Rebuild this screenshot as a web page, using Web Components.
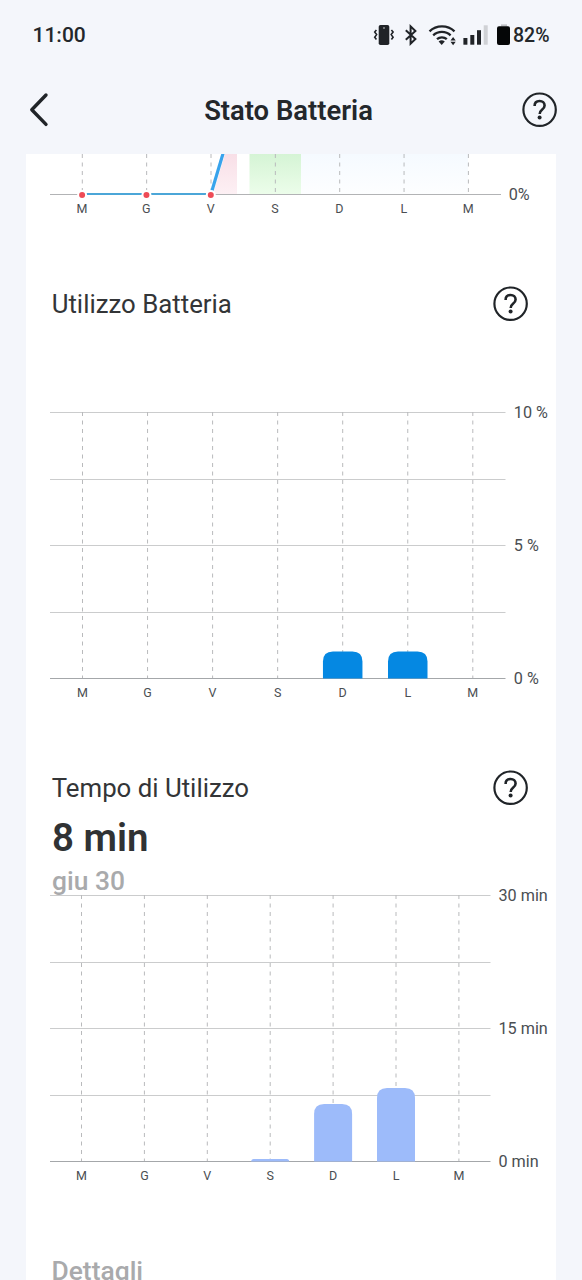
<!DOCTYPE html>
<html lang="it">
<head>
<meta charset="utf-8">
<meta name="viewport" content="width=device-width, initial-scale=1">
<title>Stato Batteria</title>
<style>
html, body { margin: 0; height: 100%; background: #f4f6fb; overflow: hidden; }
body { font-family: Roboto, "Liberation Sans", sans-serif; color: #23272b; }
</style>
</head>
<body>
<battery-app></battery-app>
<script>
const define = (name, html, extra) => customElements.define(name, class extends HTMLElement {
  connectedCallback() {
    if (this.shadowRoot) return;
    const root = this.attachShadow({ mode: 'open' });
    root.innerHTML = html;
    if (extra) extra(this, root);
  }
});

define('help-icon', `
<style>:host{display:block;width:36px;height:36px;flex:none}svg{display:block}</style>
<svg width="36" height="36" viewBox="0 0 36 36" fill="none" stroke="#202428">
  <circle cx="17.6" cy="17.7" r="16.2" stroke-width="2.2"/>
  <path d="M12.6 13.9C12.6 10.8 14.7 9 17.6 9s5 1.8 5 4.5c0 2.2-1.2 3.2-2.6 4.3-1.5 1.2-2.3 2.1-2.3 4.1" stroke-width="2.6"/>
  <circle cx="17.6" cy="25.6" r="2" fill="#202428" stroke="none"/>
</svg>`);

define('status-bar', `
<style>
:host{display:flex;align-items:center;justify-content:space-between;height:70px;padding:0 32px 0 32.5px;box-sizing:border-box}
.time{font-size:21px;font-weight:500}
.icons{display:flex;align-items:center}
svg{display:block;flex:none}
.pct{font-size:19.5px;font-weight:500;width:37px;white-space:nowrap}
</style>
<span class="time">11:00</span>
<div class="icons">
<svg width="141" height="30" viewBox="372 20 141 30" fill="#202327">
  <rect x="378.7" y="25" width="10.6" height="20" rx="1.8"/><circle cx="384" cy="28" r=".8" fill="#d8dade"/>
  <path d="M376.4 30l-1.7 2 1.9 2.6-1.9 2.6 1.7 2.3M391.4 30l1.7 2-1.9 2.6 1.9 2.6-1.7 2.3" fill="none" stroke="#202327" stroke-width="1.6"/>
  <path d="M405.8 30.2l9.6 8.8-4.8 4.6V26.4l4.8 4.6-9.6 8.8" fill="none" stroke="#202327" stroke-width="2"/>
  <g fill="none" stroke="#202327" stroke-width="2.3"><path d="M429.5 31.4a18.3 18.3 0 0 1 25 0"/><path d="M433.2 35.3a12.7 12.7 0 0 1 17.4 0"/><path d="M437 39.2a7.2 7.2 0 0 1 9.8 0"/></g>
  <path d="M438.6 41.6a4.8 4.8 0 0 1 6.2 0L441.7 45z"/>
  <path d="M450.5 40.4l2.6-3.4 2.6 3.4zM450.5 41.8h5.2l-2.6 3.4z"/>
  <rect x="463.4" y="38" width="4" height="6.7"/><rect x="470.3" y="35" width="4" height="9.7"/><rect x="477" y="30.2" width="4" height="14.5"/><rect x="483.7" y="25.3" width="4" height="19.4" fill="#cfd1d5"/>
  <path d="M501 24.4h6v2h-6z" fill="#bdbfc3"/><rect x="497" y="26.2" width="13" height="18.7" rx="2" fill="#050607"/>
</svg>
<span class="pct">82%</span>
</div>`);

define('page-header', `
<style>
:host{display:flex;align-items:center;justify-content:space-between;height:84px;padding:0 24px 5px 26px;box-sizing:border-box}
.back{width:29px}
h1{margin:0;font-size:27.4px;font-weight:600;line-height:32px;padding-top:3px;white-space:nowrap}
svg{display:block}
</style>
<div class="back"><svg width="26" height="36" viewBox="0 0 26 36" fill="none" stroke="#202428" stroke-width="3.4" stroke-linecap="round" stroke-linejoin="round"><path d="M20 3L5.8 17.7 20 32.4"/></svg></div>
<h1><slot></slot></h1>
<help-icon></help-icon>`);

define('section-head', `
<style>
:host{display:flex;align-items:center;justify-content:space-between;height:46px;padding:0 27px 0 25.7px}
h2{margin:0;font-size:25.8px;font-weight:400;color:#333537;line-height:30px;white-space:nowrap}
</style>
<h2><slot></slot></h2><help-icon></help-icon>`);

define('usage-value', `
<style>
:host{display:flex;flex-direction:column;height:84px;padding-left:26px;box-sizing:border-box}
.v{font-size:38.5px;font-weight:600;line-height:46px;color:#303234;padding-top:4px}
.d{font-size:26.4px;font-weight:500;line-height:30px;color:#a9aaac;padding-top:5px;white-space:nowrap}
</style>
<div class="v"><slot name="value"></slot></div><div class="d"><slot name="date"></slot></div>`);

const DAYS = ['M', 'G', 'V', 'S', 'D', 'L', 'M'];
const chartStyle = `
<style>
:host{display:block}
svg{display:block;overflow:visible}
text{font-family:Roboto,"Liberation Sans",sans-serif;fill:#4a4e52}
.x{font-size:12.5px;text-anchor:middle}
.y{font-size:16.2px}
.dash{stroke:#b9babc;stroke-width:1;stroke-dasharray:4 4.5}
</style>`;

define('level-chart', chartStyle + '<div></div>', (host, root) => {
  const x = i => 82 + i * 64.35;
  const days = DAYS.map((d, i) => `<line class="dash" x1="${x(i) + .3}" x2="${x(i) + .3}" y1="154" y2="194"/><text class="x" x="${x(i)}" y="213.3">${d}</text>`).join('');
  root.querySelector('div').innerHTML = `
<svg width="530" height="127" viewBox="26 154 530 127">
<defs>
<clipPath id="c"><rect x="26" y="154" width="530" height="127"/></clipPath>
<linearGradient id="r" x2="0" y2="1"><stop stop-color="#f8dfe7"/><stop offset="1" stop-color="#fdf0f4"/></linearGradient>
<linearGradient id="g" x2="0" y2="1"><stop stop-color="#d5f4d5"/><stop offset="1" stop-color="#ecfdea"/></linearGradient>
<linearGradient id="b" x2="0" y2="1"><stop stop-color="#f5faff"/><stop offset="1" stop-color="#fdfeff"/></linearGradient>
</defs>
<g clip-path="url(#c)">
<path d="M211 194L223 154H237V194z" fill="url(#r)"/>
<rect x="249.5" y="154" width="51.5" height="40" fill="url(#g)"/>
<rect x="301" y="154" width="167" height="40" fill="url(#b)"/>
<path d="M50 194.5H501" stroke="#b2b3b5"/>
${days}
<path d="M82 194H211L223.5 152" fill="none" stroke="#fff" stroke-width="4"/>
<path d="M82 194H211" stroke="#4ba6d8" stroke-width="2"/>
<path d="M211 194L223.5 152" stroke="#38a3ec" stroke-width="3.2"/>
${[0, 1, 2].map(i => `<circle cx="${x(i) + .1}" cy="194.9" r="4" fill="#ee4b56" stroke="#fff" stroke-width="2"/>`).join('')}
<text class="y" x="508.7" y="200">0%</text>
</g></svg>`;
});

/* Bar chart: data-plot holds the plot geometry, the axis labels and the bars. */
define('bar-chart', chartStyle + '<div></div>', (host, root) => {
  const o = JSON.parse(host.dataset.plot);
  const x = i => o.x0 + i * o.step;
  let s = '';
  for (let k = 0; k < 5; k++) {
    s += `<path d="M50 ${Math.round(o.top + k * 66.5) + .5}H${o.right}" stroke="${k === 4 ? '#a4a7aa' : '#cbcccd'}"/>`;
  }
  DAYS.forEach((d, i) => {
    s += `<line class="dash" x1="${x(i)}" x2="${x(i)}" y1="${o.top}" y2="${o.top + 266}"/>`;
    s += `<text class="x" x="${x(i)}" y="${o.top + 284.7}">${d}</text>`;
  });
  o.bars.forEach(([i, h]) => {
    const l = x(i) - o.bw / 2, b = o.top + 266.5, r = Math.min(10, h);
    s += `<path d="M${l} ${b}v${r - h}q0 ${-r} ${r} ${-r}h${o.bw - 2 * r}q${r} 0 ${r} ${r}v${h - r}z" fill="${o.fill}"/>`;
  });
  o.labels.forEach((t, k) => {
    s += `<text class="y" x="${o.lx}" y="${o.top + k * 133 + 5.8}">${t}</text>`;
  });
  root.querySelector('div').innerHTML = `<svg width="530" height="${o.h}" viewBox="26 ${o.top} 530 ${o.h}">${s}</svg>`;
});

define('battery-app', `
<style>
:host{display:flex;flex-direction:column;height:1280px;width:582px;overflow:hidden}
main{flex:1;margin:0 26px;background:#fff;overflow:hidden}
.gap{height:85px}
h3{margin:0;padding-left:25.5px;font-size:26.4px;line-height:30px;font-weight:500;color:#a9aaac}
</style>
<status-bar></status-bar>
<page-header>Stato Batteria</page-header>
<main>
<level-chart></level-chart>
<section-head>Utilizzo Batteria</section-head>
<div class="gap"></div>
<bar-chart data-plot='{"top":412,"h":353,"right":505.5,"x0":82.5,"step":65.05,"bw":39.5,"fill":"#0588e2","lx":513.8,"labels":["10 %","5 %","0 %"],"bars":[[4,27],[5,27]]}'></bar-chart>
<section-head>Tempo di Utilizzo</section-head>
<usage-value><span slot="value">8 min</span><span slot="date">giu 30</span></usage-value>
<bar-chart data-plot='{"top":895,"h":361,"right":490.5,"x0":81.5,"step":62.9,"bw":38,"fill":"#9dbbfa","lx":498.5,"labels":["30 min","15 min","0 min"],"bars":[[3,2.5],[4,57.5],[5,73.5]]}'></bar-chart>
<h3>Dettagli</h3>
</main>`);
</script>
</body>
</html>
